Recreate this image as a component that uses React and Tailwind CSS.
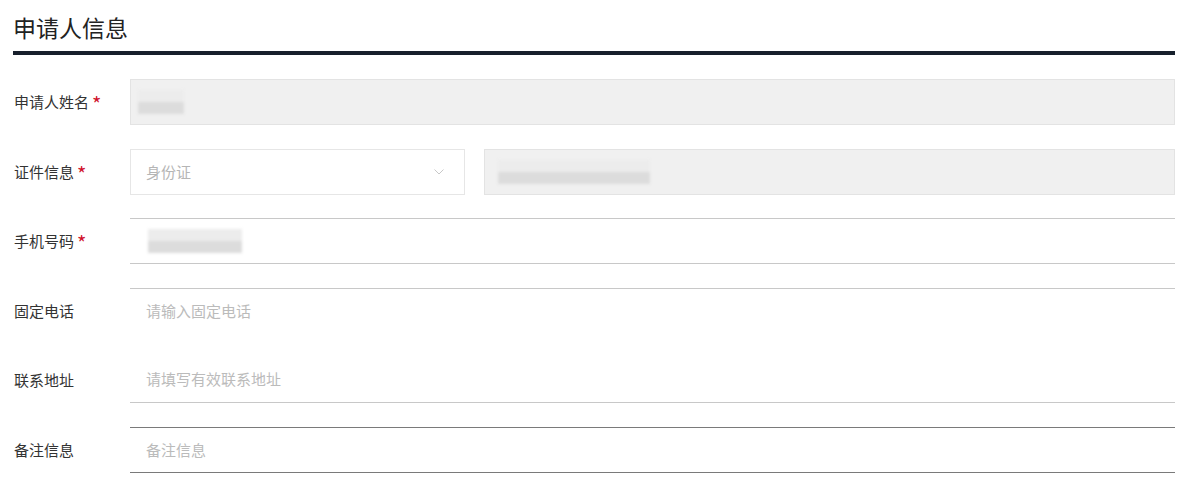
import React from "react";

const font = { fontFamily: '"Noto Sans CJK SC", "Noto Sans", sans-serif' };

function Label({ text, required }) {
  return (
    <div className="w-[117px] shrink-0 pl-px text-[15px] text-[#333] flex items-center">
      <span>{text}</span>
      {required && <span className="text-[#d0112b] ml-[3px] text-[20px] leading-none translate-y-[2px]">*</span>}
    </div>
  );
}

function Blur({ w }) {
  return (
    <div className="flex flex-col blur-[1.5px]" style={{ width: w }}>
      <div className="h-[12px] bg-[#ececec]" />
      <div className="h-[12px] bg-[#dcdcdc]" />
    </div>
  );
}

export default function App() {
  return (
    <div className="w-[1200px] h-[498px] bg-white" style={font}>
      <div className="ml-[13px] w-[1162px]">
        <div className="h-[51px] pt-[12px] text-[23px] leading-[30px] text-[#222]">申请人信息</div>
        <div className="h-[4px] bg-[#17202c]" />
        <div className="mt-[24px] flex flex-col">
          <div className="flex h-[46px]">
            <Label text="申请人姓名" required />
            <div className="flex-1 bg-[#f0f0f0] border border-[#e3e3e3] flex items-center pl-[7px]">
              <Blur w={46} />
            </div>
          </div>
          <div className="flex h-[46px] mt-[24px]">
            <Label text="证件信息" required />
            <div className="w-[335px] border border-[#e6e6e6] flex items-center justify-between pl-[15px] pr-[20px] text-[15px] text-[#b5b5b5]">
              <span>身份证</span>
              <svg width="10" height="6" viewBox="0 0 10 6" fill="none" stroke="#c8c8c8" strokeWidth="1">
                <path d="M0.5 0.5 L5 5 L9.5 0.5" />
              </svg>
            </div>
            <div className="ml-[19px] flex-1 bg-[#f0f0f0] border border-[#e3e3e3] flex items-center pl-[13px]">
              <Blur w={152} />
            </div>
          </div>
          <div className="flex h-[46px] mt-[23px]">
            <Label text="手机号码" required />
            <div className="flex-1 border-y border-[#c8c8c8] flex items-center pl-[18px]">
              <Blur w={94} />
            </div>
          </div>
          <div className="flex h-[46px] mt-[24px]">
            <Label text="固定电话" />
            <div className="flex-1 border-t border-[#c8c8c8] flex items-center pl-[16px] text-[15px] text-[#bbb]">
              请输入固定电话
            </div>
          </div>
          <div className="flex h-[46px] mt-[23px]">
            <Label text="联系地址" />
            <div className="flex-1 border-b border-[#c8c8c8] flex items-center pl-[16px] text-[15px] text-[#bbb]">
              请填写有效联系地址
            </div>
          </div>
          <div className="flex h-[46px] mt-[24px]">
            <Label text="备注信息" />
            <div className="flex-1 border-y border-[#7a7a7a] flex items-center pl-[16px] text-[15px] text-[#bbb]">
              备注信息
            </div>
          </div>
        </div>
      </div>
    </div>
  );
}
